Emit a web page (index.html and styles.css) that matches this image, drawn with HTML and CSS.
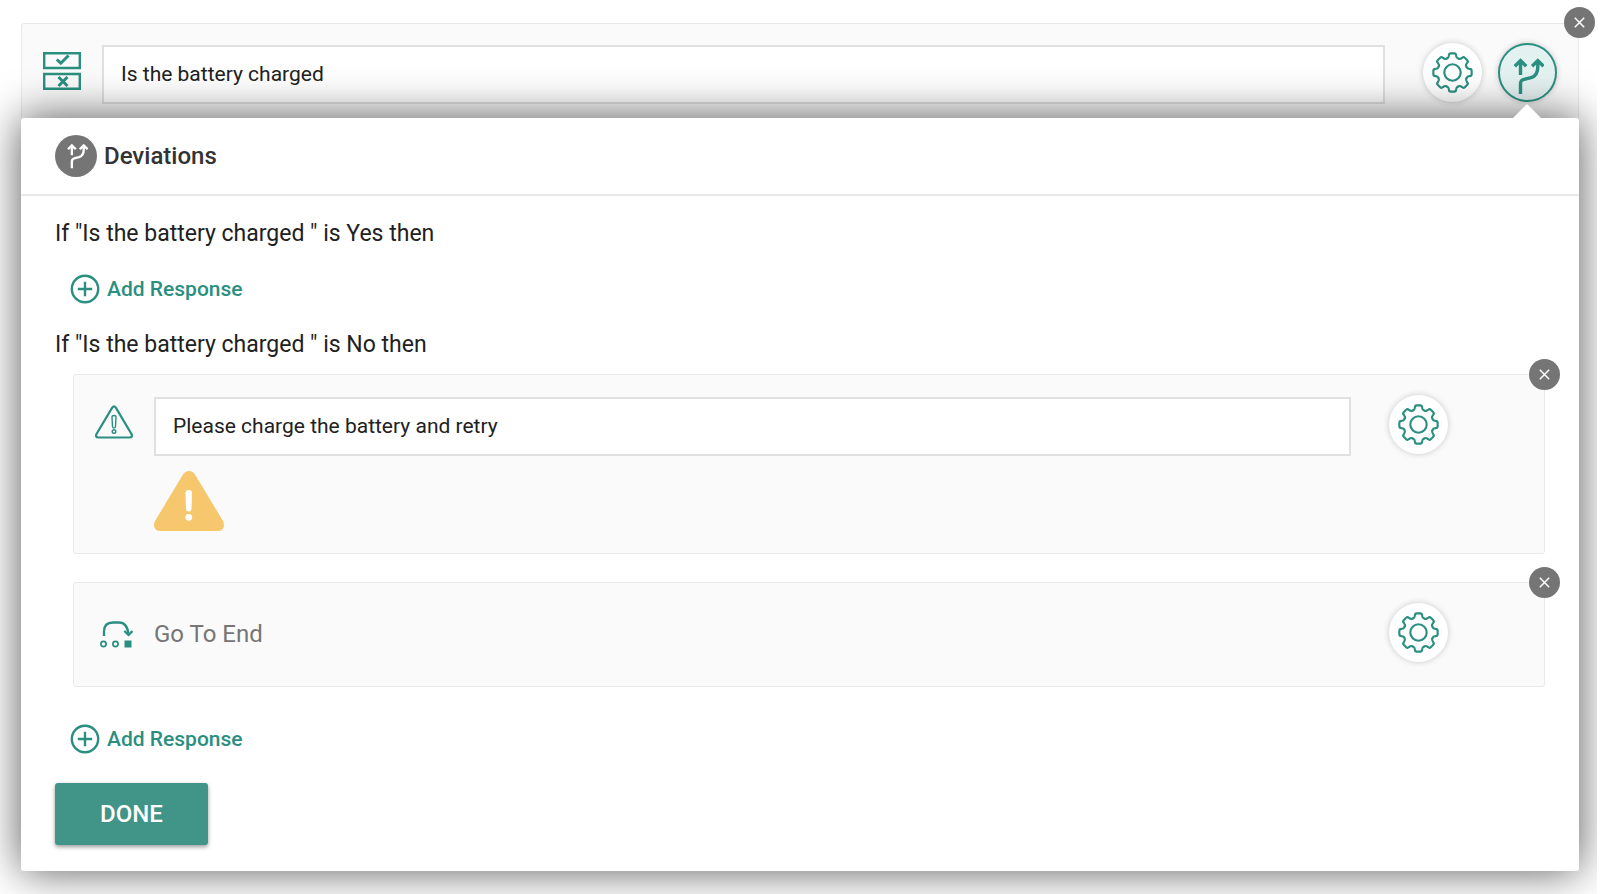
FILE: index.html
```html
<!DOCTYPE html>
<html lang="en">
<head>
<meta charset="utf-8">
<title>Deviations</title>
<link rel="stylesheet" href="styles.css">
</head>
<body>
<svg class="defs" aria-hidden="true">
  <defs>
    <path id="tooth" d="M-5.4-14.5C-4.1-14.9-3.8-16-3.7-17.4Q-3.6-19.6-1.8-19.6H1.8Q3.6-19.6 3.7-17.4C3.8-16 4.1-14.9 5.4-14.5L6.4-14.1"/>
    <symbol id="gear" viewBox="-21 -21 42 42">
      <g fill="none" stroke="currentColor" stroke-width="2.2" stroke-linecap="round" stroke-linejoin="round">
        <circle r="8.4"/>
        <use href="#tooth"/>
        <use href="#tooth" transform="rotate(45)"/>
        <use href="#tooth" transform="rotate(90)"/>
        <use href="#tooth" transform="rotate(135)"/>
        <use href="#tooth" transform="rotate(180)"/>
        <use href="#tooth" transform="rotate(225)"/>
        <use href="#tooth" transform="rotate(270)"/>
        <use href="#tooth" transform="rotate(315)"/>
      </g>
    </symbol>
    <symbol id="branch" viewBox="0 0 32 38">
      <g fill="none" stroke="currentColor" stroke-width="3.4">
        <path d="M8.5 18V4M2.8 9.2L8.5 3.6L14.2 9.2"/>
        <path d="M8.5 37V27C8.5 23.5 10 23 13 22.2L19 20.7C24 19.2 25.8 15.5 25.8 10V4M20.1 9.2L25.8 3.6L31.5 9.2"/>
      </g>
    </symbol>
    <symbol id="cross" viewBox="0 0 11 11">
      <path d="M.8.8L10.2 10.2M10.2.8L.8 10.2" fill="none" stroke="currentColor" stroke-width="1.5"/>
    </symbol>
    <symbol id="plus" viewBox="0 0 30 30">
      <g fill="none" stroke="currentColor" stroke-width="2.4"><circle cx="15" cy="15" r="13.2"/><path d="M15 7.8V22.2M7.8 15H22.2"/></g>
    </symbol>
  </defs>
</svg>

<main class="page">
  <section class="card card-main">
    <div class="row">
      <svg class="type-icon" viewBox="0 0 38 38" aria-hidden="true">
        <path d="M1.2 1.2H36.8V16H1.2ZM1.2 22H36.8V36.8H1.2Z" fill="none" stroke="currentColor" stroke-width="2.4"/>
        <path d="M13.8 7.5L17.8 11.2L25.5 3.5M15.5 25L24.5 34M24.5 25L15.5 34" fill="none" stroke="currentColor" stroke-width="3"/>
      </svg>
      <input class="field" type="text" value="Is the battery charged" aria-label="Question">
      <div class="actions">
        <button class="round-btn" type="button" aria-label="Settings"><svg class="gear-icon"><use href="#gear"/></svg></button>
        <button class="round-btn round-btn-active" type="button" aria-label="Deviations"><svg class="branch-icon"><use href="#branch"/></svg></button>
      </div>
    </div>
    <button class="close" type="button" aria-label="Remove question"><svg class="close-icon"><use href="#cross"/></svg></button>
  </section>

  <section class="popup">
    <header class="popup-head">
      <span class="head-badge"><svg class="head-icon" aria-hidden="true"><use href="#branch"/></svg></span>
      <h1 class="popup-title">Deviations</h1>
    </header>
    <div class="popup-body">
      <p class="condition">If "Is the battery charged " is Yes then</p>
      <button class="add add-first" type="button"><svg class="add-icon" aria-hidden="true"><use href="#plus"/></svg>Add Response</button>
      <p class="condition">If "Is the battery charged " is No then</p>

      <div class="responses">
        <article class="card">
          <div class="row">
            <svg class="type-icon" viewBox="0 0 38 38" aria-hidden="true">
              <g fill="none" stroke="currentColor" stroke-width="2.2" stroke-linejoin="round">
                <path d="M17.2 3.6Q19 1.1 20.8 3.6L36.5 30Q38 33.5 34.5 33.5H3.5Q0 33.5 1.5 30Z"/>
                <path d="M17 13Q17 11.5 19 11.5T21 13L20.5 22.5Q20.4 24 19 24T17.5 22.5Z" stroke-width="1.4"/>
                <circle cx="19" cy="27.5" r="1.8" stroke-width="1.4"/>
              </g>
            </svg>
            <input class="field" type="text" value="Please charge the battery and retry" aria-label="Response message">
            <div class="actions actions-nested">
              <button class="round-btn" type="button" aria-label="Message settings"><svg class="gear-icon"><use href="#gear"/></svg></button>
            </div>
          </div>
          <svg class="warning" viewBox="0 0 70 60" role="img" aria-label="Warning">
            <path d="M29 3.5Q31.2 0 35 0T41 3.5L69 50Q71 54.5 69 57.5Q67.5 60 64 60H6Q2.5 60 1 57.5Q-1 54.5 1 50Z" fill="#f6c76d"/>
            <path d="M31.5 22Q31.5 19 34.8 19T38 22L37.5 38Q37.3 40.5 34.8 40.5T32 38Z" fill="#fff"/>
            <circle cx="34.8" cy="46.3" r="3.4" fill="#fff"/>
          </svg>
          <button class="close" type="button" aria-label="Remove message"><svg class="close-icon"><use href="#cross"/></svg></button>
        </article>

        <article class="card">
          <div class="row">
            <svg class="type-icon" viewBox="0 0 38 38" aria-hidden="true">
              <g fill="none" stroke="currentColor">
                <path d="M9 24V19.500Q9 10.500 18 10.500H24Q32 10.500 33.400 21.500" stroke-width="2.300"/>
                <path d="M29.300 19L33.500 23L37.500 19" stroke-width="2.300"/>
                <circle cx="8.500" cy="32" r="2.600" stroke-width="1.700"/>
                <circle cx="20.500" cy="32" r="2.600" stroke-width="1.700"/>
              </g>
              <path d="M29.500 28.500H36.500V35.500H29.500Z" fill="currentColor"/>
            </svg>
            <p class="step-name">Go To End</p>
            <div class="actions actions-nested">
              <button class="round-btn" type="button" aria-label="Step settings"><svg class="gear-icon"><use href="#gear"/></svg></button>
            </div>
          </div>
          <button class="close" type="button" aria-label="Remove step"><svg class="close-icon"><use href="#cross"/></svg></button>
        </article>
      </div>

      <button class="add" type="button"><svg class="add-icon" aria-hidden="true"><use href="#plus"/></svg>Add Response</button>
      <button class="done" type="button">DONE</button>
    </div>
  </section>
</main>
</body>
</html>
```

FILE: styles.css
```css
* { box-sizing: border-box; }

body {
  margin: 0;
  background: #fff;
  color: #212121;
  font-family: Roboto, "Liberation Sans", sans-serif;
}

button, input { font: inherit; }
button { padding: 0; border: 0; cursor: pointer; }
h1, p { margin: 0; }
svg { display: block; }

.defs { position: absolute; width: 0; height: 0; }

.page {
  min-height: 100vh;
  margin-right: 3px;
  padding: 23px 18px 23px 21px;
  overflow: hidden;
}

.card {
  position: relative;
  padding: 20px 21px 22px;
  border: 1px solid #e9e9e9;
  border-radius: 3px;
  background: #fafafa;
}

.card-main {
  padding: 19px 21px 14px;
  border-bottom: 0;
  border-radius: 3px 3px 0 0;
}

.row {
  display: flex;
  align-items: flex-start;
}

.type-icon {
  flex: none;
  width: 38px;
  height: 38px;
  margin: 9px 21px 0 0;
  color: #2a8f80;
}

.field {
  flex: 1;
  min-width: 0;
  height: 59px;
  margin-top: 2px;
  padding: 0 17px 2px;
  border: 2px solid #e0e0e0;
  border-radius: 0;
  background: #fff;
  color: #212121;
  font-size: 21px;
}

.step-name {
  flex: 1;
  margin-top: 2px;
  color: #757575;
  font-size: 24px;
  line-height: 59px;
}

.actions {
  display: flex;
  gap: 16px;
  margin-left: 38px;
}

.actions-nested { padding-right: 75px; }

.round-btn {
  display: grid;
  place-items: center;
  width: 59px;
  height: 59px;
  border-radius: 50%;
  background: #fff;
  box-shadow: 0 0 6px rgba(0, 0, 0, .2);
  color: #2a8f80;
}

.round-btn-active {
  border: 2px solid #2a8f80;
  background: #e3f1f0;
}

.gear-icon { width: 41px; height: 41px; }
.branch-icon { width: 32px; height: 38px; margin-top: 6px; }

.close {
  position: absolute;
  top: -16px;
  right: -16px;
  z-index: 2;
  display: grid;
  place-items: center;
  width: 31px;
  height: 31px;
  border-radius: 50%;
  background: #757575;
  color: #fff;
}

.card-main .close { top: -17px; right: -17px; }

.close-icon { width: 11px; height: 11px; }

.popup {
  position: relative;
  border-radius: 3px;
  background: #fff;
  box-shadow: 0 0 44px rgba(0, 0, 0, .66);
}

.popup::before {
  content: "";
  position: absolute;
  top: -14px;
  right: 38px;
  border: 14px solid transparent;
  border-top: 0;
  border-bottom-color: #fff;
}

.popup-head {
  display: flex;
  align-items: center;
  gap: 7px;
  height: 78px;
  padding-left: 34px;
  border-bottom: 2px solid #e8e8e8;
}

.head-badge {
  display: grid;
  place-items: center;
  width: 42px;
  height: 42px;
  border-radius: 50%;
  background: #757575;
  color: #fff;
}

.head-icon { width: 22px; height: 26px; margin-left: 2px; }

.popup-title {
  color: #333;
  font-size: 24px;
  font-weight: 500;
  line-height: 28px;
}

.popup-body { padding: 24px 34px 26px; }

.condition {
  font-size: 23px;
  line-height: 28px;
}

.add {
  display: flex;
  align-items: center;
  gap: 7px;
  margin-left: 15px;
  background: none;
  color: #2a8f80;
  font-size: 21px;
  font-weight: 500;
  line-height: 30px;
}

.add-first { margin-top: 26px; margin-bottom: 27px; }
.add-icon { width: 30px; height: 30px; }

.responses {
  display: grid;
  gap: 28px;
  margin: 15px 0 37px 18px;
}

.warning {
  width: 70px;
  height: 60px;
  margin: 15px 0 0 59px;
}

.done {
  display: block;
  height: 62px;
  margin-top: 29px;
  padding: 0 45px;
  border-radius: 3px;
  background: #419488;
  box-shadow: 0 2px 4px rgba(0, 0, 0, .4);
  color: #fff;
  font-size: 24px;
  font-weight: 500;
}
```
